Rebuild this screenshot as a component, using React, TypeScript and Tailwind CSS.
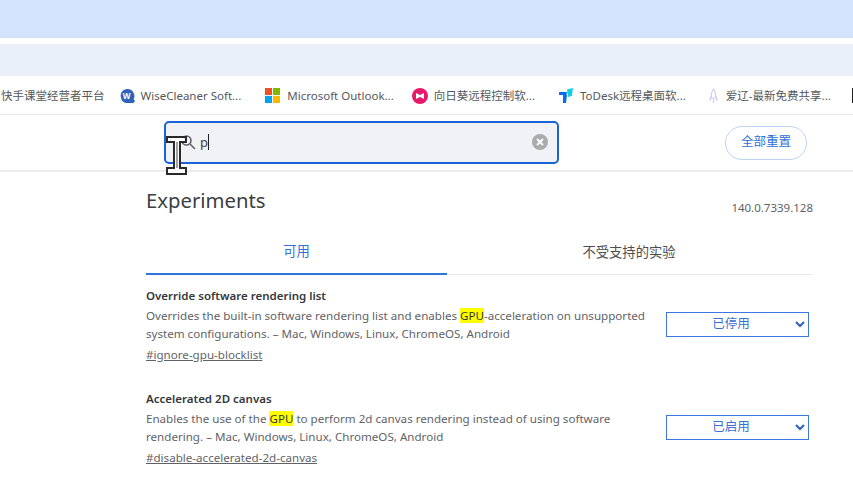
const cjk = "font-['Noto_Sans','Noto_Sans_CJK_SC',sans-serif]";

function Bookmark({ icon, label, className }: { icon?: React.ReactNode; label: string; className: string }) {
  return (
    <div className={`flex items-center gap-[6px] shrink-0 ${className}`}>
      {icon}
      <span className="text-[11.5px] leading-[16px] text-[#54585c] whitespace-nowrap">{label}</span>
    </div>
  );
}

function Wise() {
  return (
    <svg width="16" height="16" viewBox="0 0 16 16">
      <path d="M8 1a6.5 6.5 0 0 0-6 8.5A6 6 0 0 0 8 15h6a2 2 0 0 0 .6-3.8A7 7 0 0 0 8 1z" fill="#2f62b8" />
      <text x="7.7" y="11" fontSize="8" fontWeight="700" fill="#fff" textAnchor="middle">W</text>
    </svg>
  );
}
function Ms() {
  return (
    <svg width="15" height="15" viewBox="0 0 15 15" className="mr-[1px]">
      <rect x="0" y="0" width="7" height="7" fill="#f25022" />
      <rect x="8" y="0" width="7" height="7" fill="#7fba00" />
      <rect x="0" y="8" width="7" height="7" fill="#00a4ef" />
      <rect x="8" y="8" width="7" height="7" fill="#ffb900" />
    </svg>
  );
}
function Sun() {
  return (
    <svg width="16" height="16" viewBox="0 0 16 16">
      <circle cx="8" cy="8" r="8" fill="#e8196b" />
      <path d="M4 5l4 2 4-2v6L8 9l-4 2z" fill="#fff" />
    </svg>
  );
}
function ToDesk() {
  return (
    <svg width="16" height="15" viewBox="0 0 16 15">
      <path d="M1 4h8l-.6 3H1z" fill="#0a6cf0" />
      <path d="M5 7h4l-1 8H5z" fill="#0a6cf0" />
      <path d="M9 1.5L15 0l-1.2 8-3.8 1z" fill="#12cfe0" />
    </svg>
  );
}
function Rocket() {
  return (
    <svg width="13" height="16" viewBox="0 0 13 16" fill="none" stroke="#c8cdf0" strokeWidth="1.1">
      <path d="M6.5 1C4.8 3 4.2 6 4.2 10h4.6c0-4-.6-7-2.3-9z" />
      <path d="M4.2 8l-1.4 4h1.4M8.8 8l1.4 4H8.8M6.5 11v4" />
    </svg>
  );
}

function Flag({
  title,
  desc,
  tag,
  value,
  className,
  selectClass,
}: {
  title: string;
  desc: React.ReactNode;
  tag: string;
  value: string;
  className: string;
  selectClass: string;
}) {
  return (
    <div className={`flex ${className}`}>
      <div className="w-[506px] shrink-0">
        <div className="text-[11.5px] leading-[18px] font-semibold text-[#34383c]">{title}</div>
        <p className="mt-[2px] text-[11.6px] leading-[18px] text-[#5f6368]">{desc}</p>
        <div className="mt-[3px] text-[11.6px] leading-[18px] text-[#5f6368] underline">{tag}</div>
      </div>
      <div className={`ml-[14px] h-[25px] w-[143px] shrink-0 border-[1.5px] border-[#3b78e0] bg-white flex items-center text-[#3b6fd0] ${selectClass}`}>
        <span className="flex-1 text-center text-[12.5px] pb-[1px]">{value}</span>
        <svg width="10" height="7" viewBox="0 0 10 7" fill="none" stroke="#2a62c4" strokeWidth="2" className="mr-[3px]">
          <path d="M1 1l4 4 4-4" />
        </svg>
      </div>
    </div>
  );
}

function Gpu() {
  return <mark className="bg-[#ffff00] text-[#34383c]">GPU</mark>;
}

export default function App() {
  return (
    <div className={`relative h-[480px] w-[853px] overflow-hidden bg-white ${cjk}`}>
      <div className="h-[38px] bg-[#d3e3fd]" />
      <div className="h-[6px] bg-white" />
      <div className="h-[32px] bg-[#eaf0f9]" />

      <div className="relative flex h-[39px] items-center border-b border-[#e8e8e8] pt-[1px]">
        <Bookmark label="快手课堂经营者平台" className="ml-[1px]" />
        <Bookmark icon={<Wise />} label="WiseCleaner Soft..." className="ml-[14px]" />
        <Bookmark icon={<Ms />} label="Microsoft Outlook..." className="ml-[24px]" />
        <Bookmark icon={<Sun />} label="向日葵远程控制软..." className="ml-[18px]" />
        <Bookmark icon={<ToDesk />} label="ToDesk远程桌面软..." className="ml-[23px]" />
        <Bookmark icon={<Rocket />} label="爱辽-最新免费共享..." className="ml-[21px]" />
        <div className="absolute right-0 top-[12px] h-[15px] w-[1px] bg-[#222]" />
      </div>

      <div className="flex h-[57px] items-center border-b-2 border-[#ececec] pb-[1px]">
        <div className="ml-[164px] flex h-[43px] w-[395px] items-center rounded-[5px] border-2 border-[#1a62d6] bg-[#f0f2f6]">
          <svg width="16" height="16" viewBox="0 0 16 16" fill="none" stroke="#5f6368" strokeWidth="1.6" className="ml-[14px]">
            <circle cx="6.5" cy="6.5" r="4.5" />
            <path d="M10 10l5 5" />
          </svg>
          <span className="ml-[4px] text-[13px] leading-[18px] text-[#3c4043]">p</span>
          <span className="h-[16px] w-[1px] bg-[#202124]" />
          <svg width="16" height="16" viewBox="0 0 16 16" className="ml-auto mr-[9px]">
            <circle cx="8" cy="8" r="8" fill="#a9abad" />
            <path d="M5 5l6 6M11 5l-6 6" stroke="#fff" strokeWidth="1.8" />
          </svg>
        </div>
        <button className="ml-[166px] mt-[1px] flex h-[34px] w-[82px] items-center justify-center rounded-full border border-[#bcd3f3] text-[12.5px] text-[#2f6fd6]">
          全部重置
        </button>
      </div>

      <div className="pl-[146px] pr-[40px]">
        <div className="flex h-[58px] items-start justify-between">
          <h1 className="mt-[13px] text-[20.3px] leading-[30px] text-[#3c4043]">Experiments</h1>
          <span className="mt-[27px] text-[11.5px] leading-[18px] text-[#5f6368]">140.0.7339.128</span>
        </div>
        <div className="flex h-[45px] border-b border-[#e8eaed] pt-[1px] text-[13.3px]">
          <div className="flex w-[301px] items-center justify-center border-b-2 border-[#2f74d8] -mb-[1px] text-[#2f6fd6]">可用</div>
          <div className="flex flex-1 items-center justify-center pr-[2px] text-[#4a4e52]">不受支持的实验</div>
        </div>

        <Flag
          className="mt-[12px]"
          selectClass="mt-[25px]"
          title="Override software rendering list"
          desc={<>Overrides the built-in software rendering list and enables <Gpu />-acceleration on unsupported system configurations. – Mac, Windows, Linux, ChromeOS, Android</>}
          tag="#ignore-gpu-blocklist"
          value="已停用"
        />
        <Flag
          className="mt-[26px]"
          selectClass="mt-[25px]"
          title="Accelerated 2D canvas"
          desc={<>Enables the use of the <Gpu /> to perform 2d canvas rendering instead of using software rendering. – Mac, Windows, Linux, ChromeOS, Android</>}
          tag="#disable-accelerated-2d-canvas"
          value="已启用"
        />
      </div>

      <svg width="21" height="39" viewBox="0 0 21 39" className="absolute left-[166px] top-[136px]">
        <path d="M1 1h19v5h-6v26h6v6H1v-6h7V6H1z" fill="#fff" stroke="#2a2a2a" strokeWidth="2" />
        <path d="M11 6v26" stroke="#a0a0a0" strokeWidth="2" />
      </svg>
    </div>
  );
}
